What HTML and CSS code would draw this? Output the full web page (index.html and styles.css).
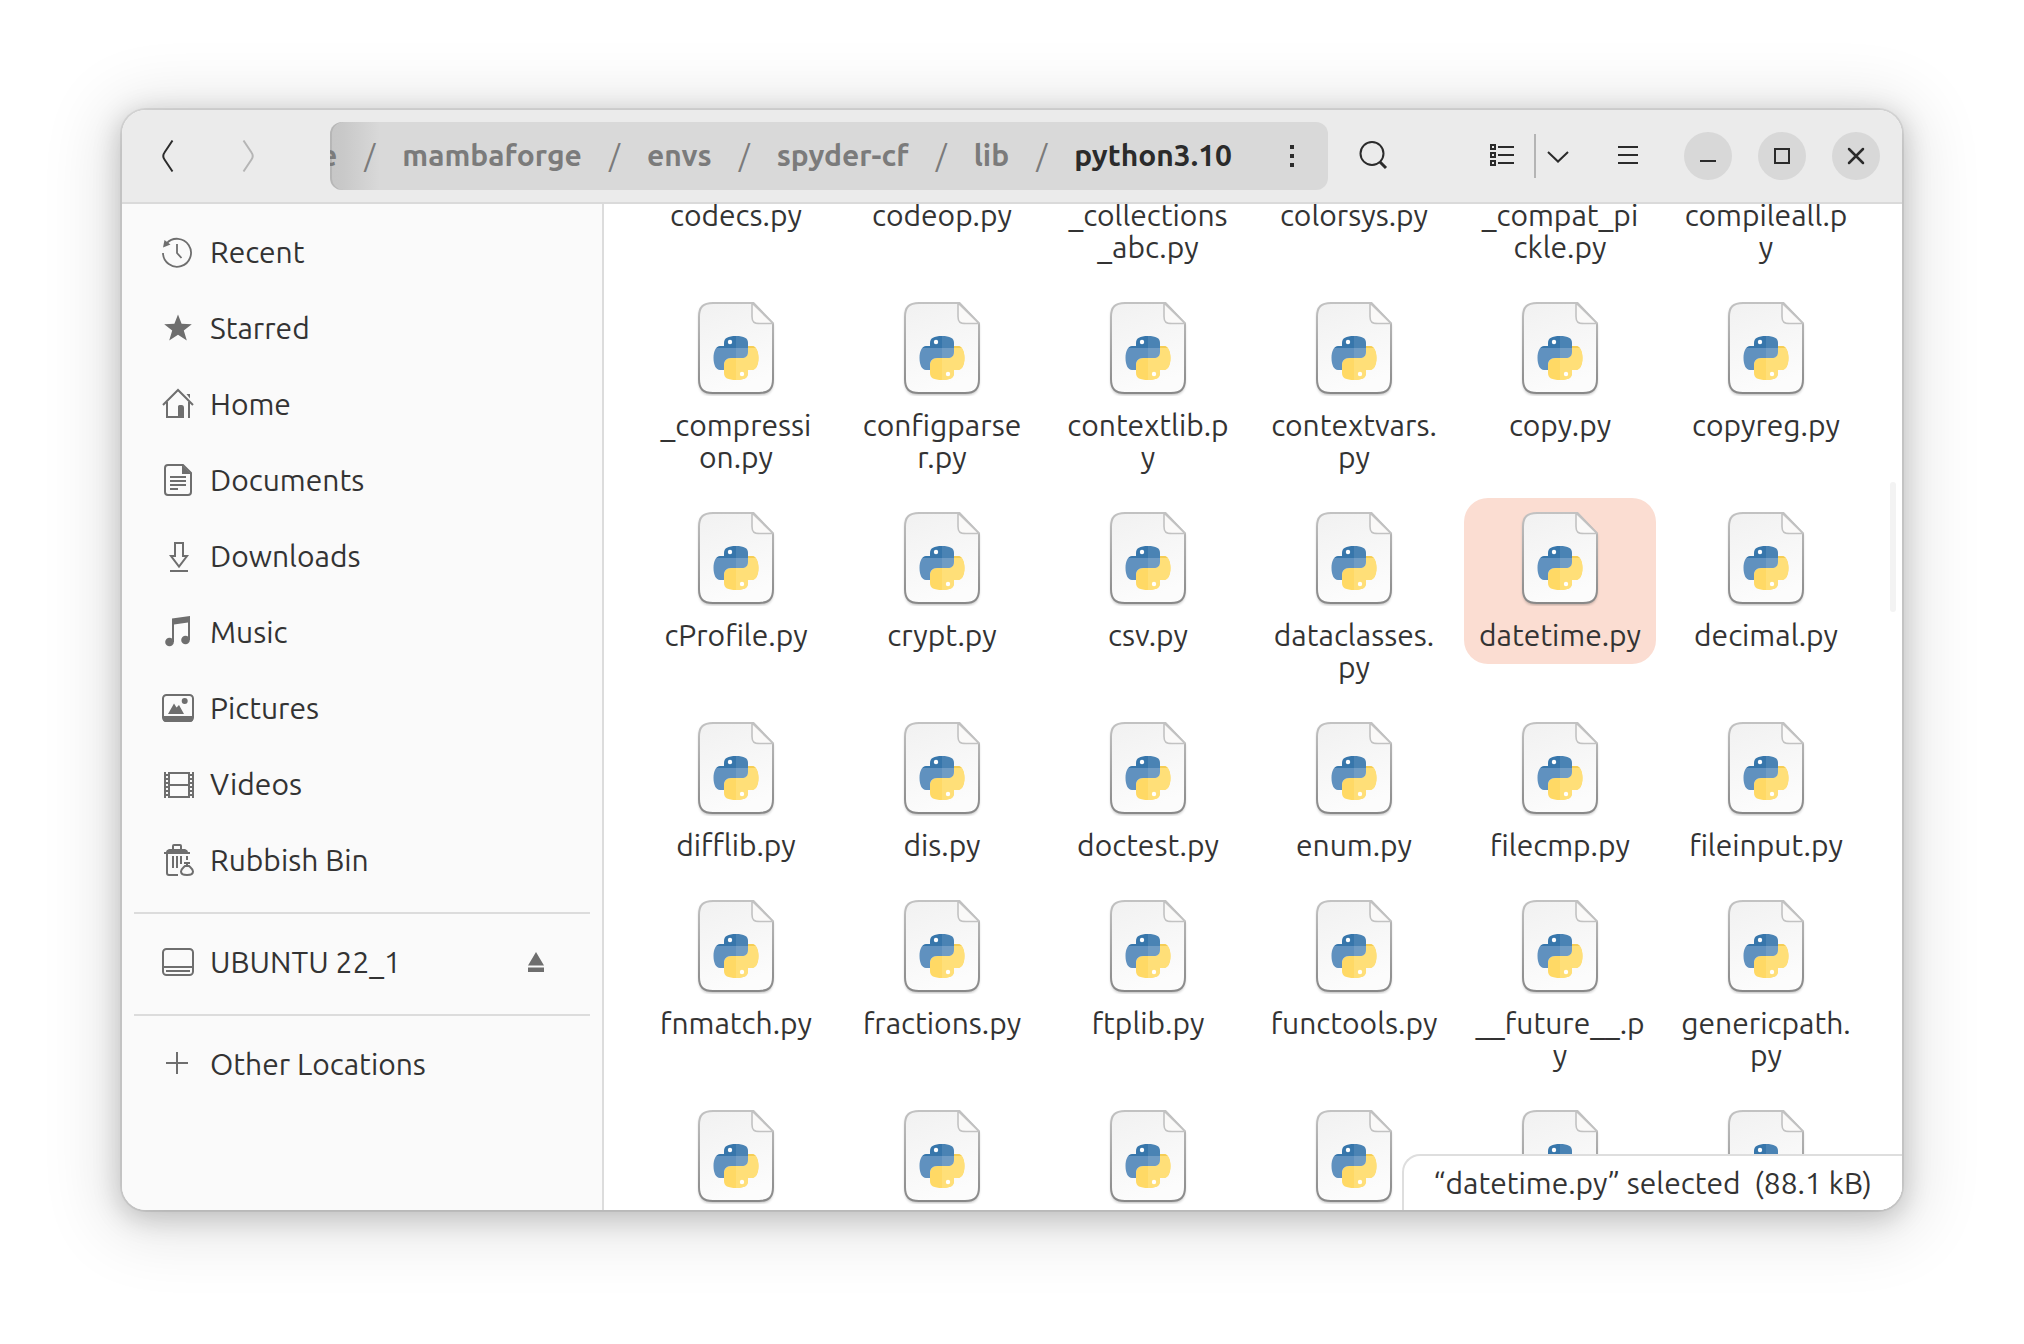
FILE: index.html
```html
<!DOCTYPE html>
<html lang="en">
<head>
<meta charset="utf-8">
<title>python3.10</title>
<link rel="stylesheet" href="styles.css">
</head>
<body>
<svg class="defs" aria-hidden="true">
  <defs>
    <linearGradient id="paper" x1="0" y1="0" x2="0.3" y2="1">
      <stop offset="0" stop-color="#f1f1f1"/><stop offset="1" stop-color="#fcfcfc"/>
    </linearGradient>
    <linearGradient id="edge" x1="0" y1="0" x2="0" y2="1">
      <stop offset="0" stop-color="#c2c2c2"/><stop offset="1" stop-color="#888"/>
    </linearGradient>
    <filter id="soft" x="-20%" y="-20%" width="140%" height="140%"><feGaussianBlur stdDeviation="1.5"/></filter>
    <clipPath id="snake-blue"><path d="M36 46V43c0-5 4-7 12-7s12 2 12 7v9c0 4-2.500 6-6 6H43c-4.500 0-7 3-7 7v5h-4c-4 0-6.500-5-6.500-12S28 46 32 46z"/></clipPath>
    <clipPath id="snake-yellow"><path d="M60 46h4c4 0 6.500 5 6.500 12S68 70 64 70h-4v3c0 5-4 7-12 7s-12-2-12-7v-8c0-4 2.500-7 7-7h11c3.500 0 6-2 6-6z"/></clipPath>
    <symbol id="python-file" viewBox="0 0 96 96">
      <path d="M24 5h41l20 20v55c0 11-4 15-14 15H25c-10 0-14-4-14-15V19C11 8 14 5 24 5z" fill="#000" opacity=".28" filter="url(#soft)"/>
      <path d="M25 3h40.500L85 23.500V79c0 10-4 14-14 14H25c-10 0-14-4-14-14V17C11 7 15 3 25 3z" fill="url(#paper)" stroke="url(#edge)" stroke-width="2"/>
      <path d="M64 3l21 20.500H72c-6 0-8-1.500-8-7z" fill="#faf9f8" stroke="#c2c2c2" stroke-width="1.600" stroke-linejoin="round"/>
      <g clip-path="url(#snake-yellow)">
        <path d="M24 34h48v48H24z" fill="#ffd965"/>
        <path d="M48 34h24v48H48z" fill="#ffdf78"/>
        <path d="M24 34h48v14H24z" fill="#f5cd55"/>
      </g>
      <g clip-path="url(#snake-blue)">
        <path d="M24 34h24v14H24z" fill="#3776ab"/>
        <path d="M48 34h24v14H48z" fill="#4a83b4"/>
        <path d="M24 48h24v34H24z" fill="#6091bf"/>
        <path d="M48 48h24v34H48z" fill="#709cc4"/>
      </g>
      <circle cx="42" cy="42" r="2.200" fill="#fff"/>
      <circle cx="54" cy="74" r="2.200" fill="#fff"/>
    </symbol>
  </defs>
</svg>

<main class="window">
  <header class="headerbar">
    <nav class="history">
      <button class="tool" aria-label="Back"><svg width="48" height="48" viewBox="0 0 48 48"><path d="M28.500 8.500 20.500 20.500Q18 24 20.500 27.500L28.500 39.500" fill="none" stroke="currentColor" stroke-width="2"/></svg></button>
      <button class="tool" aria-label="Forward" disabled><svg width="48" height="48" viewBox="0 0 48 48"><path d="M19.500 8.500 27.500 20.500Q30 24 27.500 27.500L19.500 39.500" fill="none" stroke="currentColor" stroke-width="2"/></svg></button>
    </nav>
    <div class="pathbar">
      <div class="crumbs">
        <button class="crumb">home</button><span>/</span>
        <button class="crumb">mambaforge</button><span>/</span>
        <button class="crumb">envs</button><span>/</span>
        <button class="crumb">spyder-cf</button><span>/</span>
        <button class="crumb">lib</button><span>/</span>
        <button class="crumb current">python3.10</button>
      </div>
      <button class="more" aria-label="Folder menu"><svg width="8" height="24" viewBox="0 0 8 24"><path d="M2 1h4v4H2zM2 10h4v4H2zM2 19h4v4H2z" fill="currentColor"/></svg></button>
    </div>
    <button class="tool search" aria-label="Search"><svg width="32" height="32" viewBox="0 0 32 32" fill="none" stroke="currentColor"><circle cx="14" cy="13.500" r="11.500" stroke-width="2"/><path d="M22 22l6 6" stroke-width="3"/></svg></button>
    <div class="view-switch">
      <button class="tool" aria-label="List view"><svg width="32" height="32" viewBox="0 0 32 32" fill="none" stroke="currentColor" stroke-width="2"><path d="M5 5h4v4H5zM5 13h4v4H5zM5 21h4v4H5zM12 7h16M12 15h16M12 23h16"/></svg></button>
      <span class="divider"></span>
      <button class="tool" aria-label="View options"><svg width="32" height="32" viewBox="0 0 32 32" fill="none" stroke="currentColor" stroke-width="2"><path d="M6 12l10 9.500L26 12"/></svg></button>
    </div>
    <button class="tool menu" aria-label="Main menu"><svg width="32" height="32" viewBox="0 0 32 32" stroke="currentColor" stroke-width="2"><path d="M6 7h20M6 15h20M6 23h20"/></svg></button>
    <div class="controls">
      <button class="control" aria-label="Minimise"><svg width="48" height="48" viewBox="0 0 48 48"><path d="M16 29h16" stroke="currentColor" stroke-width="2"/></svg></button>
      <button class="control" aria-label="Maximise"><svg width="48" height="48" viewBox="0 0 48 48"><path d="M17 17h14v14H17z" fill="none" stroke="currentColor" stroke-width="2"/></svg></button>
      <button class="control" aria-label="Close"><svg width="48" height="48" viewBox="0 0 48 48"><path d="M17 17l14 14M31 17 17 31" stroke="currentColor" stroke-width="2.500" stroke-linecap="round"/></svg></button>
    </div>
  </header>

  <div class="body">
    <aside class="sidebar">
      <a class="place" href="#"><svg viewBox="0 0 32 32" fill="none" stroke="currentColor" stroke-width="1.800"><path d="M1 17a14 14 0 1 0 3.500-9.500"/><path d="M15 8v9l4.500 5"/><path d="M1 11.500 2.500 4l6 4.500z" fill="currentColor" stroke="none"/></svg>Recent</a>
      <a class="place" href="#"><svg viewBox="0 0 32 32"><path d="M16 2.500l3.600 9.300 10.200.5-8 6.300 3 10L16 22.800l-8.800 5.800 3-10-8-6.300 10.200-.5z" fill="currentColor"/></svg>Starred</a>
      <a class="place" href="#"><svg viewBox="0 0 32 32" fill="none" stroke="currentColor" stroke-width="2"><path d="M1 17 16 2l15 15M5 14v15h14M27 14v16"/><path d="M16 30V18.500q0-1.500 1.500-1.500h2q2.500 0 2.500 3v10zM24.500 6H28v4.500z" fill="currentColor" stroke="none"/></svg>Home</a>
      <a class="place" href="#"><svg viewBox="0 0 32 32" fill="none" stroke="currentColor" stroke-width="2"><path d="M6 1h15l8 8v19q0 3-3 3H6q-3 0-3-3V4q0-3 3-3z"/><path d="M20 1v9h9z" fill="currentColor" stroke="none"/><path d="M8 13h16M8 17h16M8 21h16M8 25h8"/></svg>Documents</a>
      <a class="place" href="#"><svg viewBox="0 0 32 32" fill="none" stroke="currentColor" stroke-width="2"><path d="M13 16V3h8v13h4l-8 10.500L9 16zM8 31h18"/></svg>Downloads</a>
      <a class="place" href="#"><svg viewBox="0 0 32 32" fill="currentColor"><path d="M10 2.500 28 0v24h-2V6.500L12 8.500V26h-2z"/><circle cx="7.500" cy="26" r="4.300"/><circle cx="23.500" cy="24" r="4.300"/></svg>Music</a>
      <a class="place" href="#"><svg viewBox="0 0 32 32" fill="currentColor"><rect x="1" y="3" width="30" height="26" rx="3.500" fill="none" stroke="currentColor" stroke-width="2"/><path d="M1 24h30v3q0 3-3 3H4q-3 0-3-3zM6 22l6-10.500 2.500 4L17 13l5 9z"/><circle cx="22.700" cy="9" r="3"/></svg>Pictures</a>
      <a class="place" href="#"><svg viewBox="0 0 32 32" fill="none" stroke="currentColor" stroke-width="2"><path d="M3 4v26M7 4v26M27 4v26M31 4v26M7 5h20M7 17h20M7 29h20"/><path d="M5 6v22M29 6v22" stroke-dasharray="2 2"/></svg>Videos</a>
      <a class="place" href="#"><svg viewBox="0 0 32 32" fill="none" stroke="currentColor" stroke-width="2"><path d="M11 5V2q0-1 1-1h6q1 0 1 1v3"/><path d="M2 8h2q0-2 3-3h16q3 1 3 3h2v2H2z" fill="currentColor" stroke="none"/><path d="M5 10v19q0 2 2 2h9M11 12v12M15 12v12M19 12v8M25 12v4M22 19h6M25 19v3"/><path d="M23 22h4c2 2 4 3 4 5.500S29 31 25 31s-6-1-6-3.500 2-3.500 4-5.500z"/></svg>Rubbish Bin</a>
      <hr>
      <div class="volume">
        <a class="place" href="#"><svg viewBox="0 0 32 32" fill="none" stroke="currentColor" stroke-width="2"><rect x="1" y="3" width="30" height="26" rx="3.500"/><path d="M1 21h30M4 25h24"/></svg>UBUNTU 22_1</a>
        <button class="eject" aria-label="Eject"><svg width="16" height="20" viewBox="0 0 16 20" fill="currentColor"><path d="M8 0l8 13.500H0zM0 15.500h16V20H0z"/></svg></button>
      </div>
      <hr>
      <a class="place" href="#"><svg viewBox="0 0 32 32" stroke="currentColor" stroke-width="2"><path d="M4 15h22M15 4v22"/></svg>Other Locations</a>
    </aside>

    <section class="content">
      <div class="files">
        <button class="file"><svg><use href="#python-file"/></svg>codecs.py</button>
        <button class="file"><svg><use href="#python-file"/></svg>codeop.py</button>
        <button class="file"><svg><use href="#python-file"/></svg>_collections<br>_abc.py</button>
        <button class="file"><svg><use href="#python-file"/></svg>colorsys.py</button>
        <button class="file"><svg><use href="#python-file"/></svg>_compat_pi<br>ckle.py</button>
        <button class="file"><svg><use href="#python-file"/></svg>compileall.p<br>y</button>

        <button class="file"><svg><use href="#python-file"/></svg>_compressi<br>on.py</button>
        <button class="file"><svg><use href="#python-file"/></svg>configparse<br>r.py</button>
        <button class="file"><svg><use href="#python-file"/></svg>contextlib.p<br>y</button>
        <button class="file"><svg><use href="#python-file"/></svg>contextvars.<br>py</button>
        <button class="file"><svg><use href="#python-file"/></svg>copy.py</button>
        <button class="file"><svg><use href="#python-file"/></svg>copyreg.py</button>

        <button class="file"><svg><use href="#python-file"/></svg>cProfile.py</button>
        <button class="file"><svg><use href="#python-file"/></svg>crypt.py</button>
        <button class="file"><svg><use href="#python-file"/></svg>csv.py</button>
        <button class="file"><svg><use href="#python-file"/></svg>dataclasses.<br>py</button>
        <button class="file selected"><svg><use href="#python-file"/></svg>datetime.py</button>
        <button class="file"><svg><use href="#python-file"/></svg>decimal.py</button>

        <button class="file"><svg><use href="#python-file"/></svg>difflib.py</button>
        <button class="file"><svg><use href="#python-file"/></svg>dis.py</button>
        <button class="file"><svg><use href="#python-file"/></svg>doctest.py</button>
        <button class="file"><svg><use href="#python-file"/></svg>enum.py</button>
        <button class="file"><svg><use href="#python-file"/></svg>filecmp.py</button>
        <button class="file"><svg><use href="#python-file"/></svg>fileinput.py</button>

        <button class="file"><svg><use href="#python-file"/></svg>fnmatch.py</button>
        <button class="file"><svg><use href="#python-file"/></svg>fractions.py</button>
        <button class="file"><svg><use href="#python-file"/></svg>ftplib.py</button>
        <button class="file"><svg><use href="#python-file"/></svg>functools.py</button>
        <button class="file"><svg><use href="#python-file"/></svg>__future__.p<br>y</button>
        <button class="file"><svg><use href="#python-file"/></svg>genericpath.<br>py</button>

        <button class="file"><svg><use href="#python-file"/></svg></button>
        <button class="file"><svg><use href="#python-file"/></svg></button>
        <button class="file"><svg><use href="#python-file"/></svg></button>
        <button class="file"><svg><use href="#python-file"/></svg></button>
        <button class="file"><svg><use href="#python-file"/></svg></button>
        <button class="file"><svg><use href="#python-file"/></svg></button>
      </div>
      <div class="scroll-thumb"></div>
      <div class="status">“datetime.py” selected&nbsp; (88.1 kB)</div>
    </section>
  </div>
</main>
</body>
</html>
```
FILE: styles.css
```css
* { box-sizing: border-box; }

body {
  margin: 0;
  height: 100vh;
  padding: 110px 122px 134px;
  background: #fff;
  color: #333;
  font: 30px/32px Ubuntu, "Noto Sans", sans-serif;
}

.defs { position: absolute; width: 0; height: 0; }

button {
  margin: 0;
  padding: 0;
  border: 0;
  background: none;
  color: inherit;
  font: inherit;
}

svg { display: block; flex: none; }

.window {
  display: flex;
  flex-direction: column;
  height: 100%;
  border-radius: 24px;
  overflow: hidden;
  box-shadow: 0 0 0 2px rgba(0, 0, 0, .08), 0 6px 28px 2px rgba(0, 0, 0, .2), 0 8px 64px 20px rgba(0, 0, 0, .1);
}

/* Header bar */
.headerbar {
  display: flex;
  align-items: center;
  flex: none;
  height: 94px;
  padding: 0 22px;
  border-bottom: 2px solid #dadada;
  background: #ebebeb;
  color: #2b2b2b;
}

.history { display: flex; gap: 32px; width: 186px; }
.tool:disabled { color: #b5b5b5; }

.pathbar {
  display: flex;
  align-items: center;
  flex: 1;
  min-width: 0;
  height: 68px;
  overflow: hidden;
  border-radius: 12px;
  background: linear-gradient(90deg, #c6c6c6, #c9c9c9 14px, #d9d9d9 50px);
  box-shadow: inset 2px 0 0 rgba(0, 0, 0, .08);
}

.crumbs {
  display: flex;
  justify-content: flex-end;
  align-items: center;
  gap: 27px;
  flex: 1;
  min-width: 0;
  padding-bottom: 2px;
  overflow: hidden;
  color: #7b7b7b;
  white-space: nowrap;
}

.crumbs > * { flex: none; }
.crumb { font-weight: 700; }
.crumb.current { color: #2b2b2b; }
.more { display: flex; justify-content: center; width: 72px; margin-left: 24px; }

.search { margin-left: 30px; }
.view-switch { display: flex; align-items: center; margin-left: 96px; }
.divider { width: 2px; height: 44px; margin: 0 6px 0 16px; background: #b4b4b4; }
.menu { margin-left: 38px; }

.controls { display: flex; gap: 26px; margin-left: 40px; }
.control { border-radius: 50%; background: #d8d8d8; }

/* Sidebar */
.body { display: flex; flex: 1; min-height: 0; }

.sidebar {
  flex: none;
  width: 482px;
  padding-top: 10px;
  border-right: 2px solid #dcdcdc;
  background: #fafafa;
}

.place {
  display: flex;
  align-items: center;
  gap: 16px;
  flex: 1;
  height: 76px;
  padding-left: 40px;
  color: #333;
  text-decoration: none;
}

.place svg { width: 32px; height: 32px; color: #6e6e6e; overflow: visible; }

.sidebar hr {
  height: 2px;
  margin: 14px 12px 10px;
  border: 0;
  background: #dcdcdc;
}

.volume { display: flex; align-items: center; padding-right: 58px; }
.eject { color: #6e6e6e; }

/* File grid */
.content { position: relative; flex: 1; min-width: 0; overflow: hidden; background: #fff; }

.files {
  display: grid;
  grid-template-columns: repeat(6, minmax(0, 1fr));
  align-items: start;
  gap: 12px 14px;
  margin-top: -126px;
  padding: 0 40px 0 36px;
}

.file {
  padding: 12px 0 13px;
  border-radius: 24px;
  text-align: center;
}

.file svg { width: 96px; height: 96px; margin: 0 auto 13px; }
.file.selected { background: #fbddd2; }

.scroll-thumb {
  position: absolute;
  top: 278px;
  right: 6px;
  width: 6px;
  height: 130px;
  border-radius: 3px;
  background: #f3f3f3;
}

.status {
  position: absolute;
  right: 0;
  bottom: 0;
  padding: 11px 30px;
  border: solid #dedede;
  border-width: 2px 0 0 2px;
  border-top-left-radius: 18px;
  background: #fff;
  white-space: nowrap;
}
```
